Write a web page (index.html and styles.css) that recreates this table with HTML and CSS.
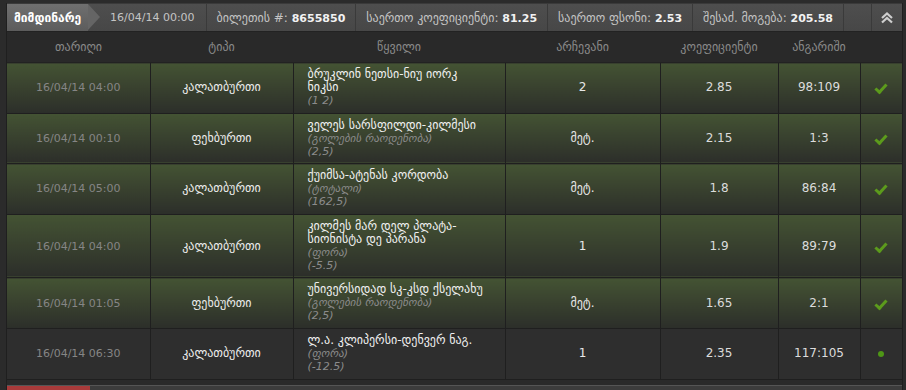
FILE: index.html
```html
<!DOCTYPE html>
<html>
<head>
<meta charset="utf-8">
<link rel="stylesheet" href="styles.css">
</head>
<body>
<div class="panel">
  <div class="topbar">
    <div class="tab">მიმდინარე</div>
    <div class="item first"><span class="num">16/04/14 00:00</span></div>
    <div class="item"><span>ბილეთის #: <b>8655850</b></span></div>
    <div class="item"><span>საერთო კოეფიციენტი: <b>81.25</b></span></div>
    <div class="item"><span>საერთო ფსონი: <b>2.53</b></span></div>
    <div class="item"><span>შესაძ. მოგება: <b>205.58</b></span></div>
    <div class="item empty"></div>
    <div class="toggle">
      <svg width="14" height="12" viewBox="0 0 14 12"><path d="M2 6 L7 1.5 L12 6 M2 10.5 L7 6 L12 10.5" fill="none" stroke="#cfcfcf" stroke-width="2.2"/></svg>
    </div>
  </div>
  <table class="bets">
    <colgroup>
      <col class="c-date"><col class="c-type"><col class="c-event"><col class="c-pick"><col class="c-odds"><col class="c-score"><col class="c-status">
    </colgroup>
    <thead>
      <tr><th>თარიღი</th><th>ტიპი</th><th>წყვილი</th><th>არჩევანი</th><th>კოეფიციენტი</th><th>ანგარიში</th><th></th></tr>
    </thead>
    <tbody>
      <tr class="won">
        <td class="date">16/04/14 04:00</td>
        <td class="type">კალათბურთი</td>
        <td class="event"><div class="name">ბრუკლინ ნეთსი-ნიუ იორკ ნიკსი</div><div class="sub">(1 2)</div></td>
        <td class="pick">2</td>
        <td class="odds">2.85</td>
        <td class="odds">98:109</td>
        <td class="status"><span class="check"></span></td>
      </tr>
      <tr class="won">
        <td class="date">16/04/14 00:10</td>
        <td class="type">ფეხბურთი</td>
        <td class="event"><div class="name">ველეს სარსფილდი-კილმესი</div><div class="sub">(გოლების რაოდენობა)</div><div class="sub">(2,5)</div></td>
        <td class="pick">მეტ.</td>
        <td class="odds">2.15</td>
        <td class="odds">1:3</td>
        <td class="status"><span class="check"></span></td>
      </tr>
      <tr class="won">
        <td class="date">16/04/14 05:00</td>
        <td class="type">კალათბურთი</td>
        <td class="event"><div class="name">ქუიმსა-ატენას კორდობა</div><div class="sub">(ტოტალი)</div><div class="sub">(162,5)</div></td>
        <td class="pick">მეტ.</td>
        <td class="odds">1.8</td>
        <td class="odds">86:84</td>
        <td class="status"><span class="check"></span></td>
      </tr>
      <tr class="won">
        <td class="date">16/04/14 04:00</td>
        <td class="type">კალათბურთი</td>
        <td class="event"><div class="name">კილმეს მარ დელ პლატა-სიონისტა დე პარანა</div><div class="sub">(ფორა)</div><div class="sub">(-5.5)</div></td>
        <td class="pick">1</td>
        <td class="odds">1.9</td>
        <td class="odds">89:79</td>
        <td class="status"><span class="check"></span></td>
      </tr>
      <tr class="won">
        <td class="date">16/04/14 01:05</td>
        <td class="type">ფეხბურთი</td>
        <td class="event"><div class="name">უნივერსიდად სკ-კსდ ქსელახუ</div><div class="sub">(გოლების რაოდენობა)</div><div class="sub">(2,5)</div></td>
        <td class="pick">მეტ.</td>
        <td class="odds">1.65</td>
        <td class="odds">2:1</td>
        <td class="status"><span class="check"></span></td>
      </tr>
      <tr class="pending">
        <td class="date">16/04/14 06:30</td>
        <td class="type">კალათბურთი</td>
        <td class="event"><div class="name">ლ.ა. კლიპერსი-დენვერ ნაგ.</div><div class="sub">(ფორა)</div><div class="sub">(-12.5)</div></td>
        <td class="pick">1</td>
        <td class="odds">2.35</td>
        <td class="odds">117:105</td>
        <td class="status"><span class="dot"></span></td>
      </tr>
    </tbody>
  </table>
  <div class="footer"><span class="footer-red"></span></div>
</div>
</body>
</html>
```
FILE: styles.css
```css
html, body {
  margin: 0;
  padding: 0;
  background: #2b2b2b;
  font-family: "DejaVu Sans", sans-serif;
  font-size: 12px;
  color: #e6e6e6;
  overflow: hidden;
}
.panel {
  margin: 3px 3px 0 6px;
  border-left: 1px solid #1f1f1f;
  border-right: 1px solid #1f1f1f;
  background: #2a2a2a;
}
.topbar {
  display: flex;
  height: 27px;
  background: linear-gradient(#4e4e4e, #474747);
  border-bottom: 1px solid #222;
  border-top: 1px solid #3a3a3a;
  color: #c4c4c4;
  font-size: 12px;
}
.topbar b { color: #f2f2f2; font-size: 11px; }
.topbar .num { font-size: 11px; }
.tab {
  position: relative;
  width: 81px;
  flex: none;
  padding-left: 7px;
  box-sizing: border-box;
  display: flex;
  align-items: center;
  font-weight: bold;
  color: #fff;
  background: linear-gradient(#6f6f6f, #5c5c5c);
  margin-right: 12px;
}
.tab::after {
  content: "";
  position: absolute;
  right: -12px;
  top: 0;
  border-top: 13.5px solid transparent;
  border-bottom: 13.5px solid transparent;
  border-left: 12px solid #656565;
}
.item {
  display: flex;
  align-items: center;
  padding: 0 10px;
  border-right: 1px solid #3a3a3a;
  white-space: nowrap;
}
.item.first { padding-right: 11px; }
.item.empty { flex: 1; padding: 0; }
.toggle {
  width: 30px;
  display: flex;
  align-items: center;
  justify-content: center;
}
.bets {
  width: 100%;
  border-collapse: collapse;
  table-layout: fixed;
}
.c-date { width: 143px; }
.c-type { width: 143px; }
.c-event { width: 212px; }
.c-pick { width: 155px; }
.c-odds { width: 118px; }
.c-score { width: 82px; }
.c-status { width: 42px; }
.bets th {
  height: 30px;
  font-weight: normal;
  color: #8a8a8a;
  background: #292929;
  text-align: center;
  padding: 0;
  border-bottom: 1px solid #222;
}
.bets td {
  border: 1px solid #1f1f1f;
  border-top: 1px solid #55663f;
  text-align: center;
  padding: 0;
  line-height: 13px;
}
.bets td:first-child { border-left: none; }
.bets td:last-child { border-right: none; }
.won td {
  background: linear-gradient(#445333, #2c2e2a);
}
.pending td {
  background: #2e2e2e;
  border-top: 1px solid #3a3a3a;
}
.date { color: #858585; font-size: 11px; }
.type { color: #ececec; }
.event {
  text-align: left !important;
  padding: 5px 14px 5.6px 14px !important;
}
.name { color: #f0f0f0; }
.sub { color: #8b8b8b; font-style: italic; font-size: 11px; }
.pick { color: #e8e8e8; }
.odds { color: #dcdcdc; }
.check {
  display: inline-block;
  width: 9px;
  height: 4px;
  border-left: 3px solid #5c9b1c;
  border-bottom: 3px solid #5c9b1c;
  transform: rotate(-48deg);
  margin-top: -6px;
}
.dot {
  display: inline-block;
  width: 6px;
  height: 6px;
  border-radius: 50%;
  background: #4e9616;
  margin-top: 4px;
}
.footer {
  margin-top: 5px;
  height: 6px;
  background: #3c3c3c;
  border-top: 1px solid #555;
  display: flex;
}
.footer-red {
  width: 83px;
  background: #a83a3a;
}
```
